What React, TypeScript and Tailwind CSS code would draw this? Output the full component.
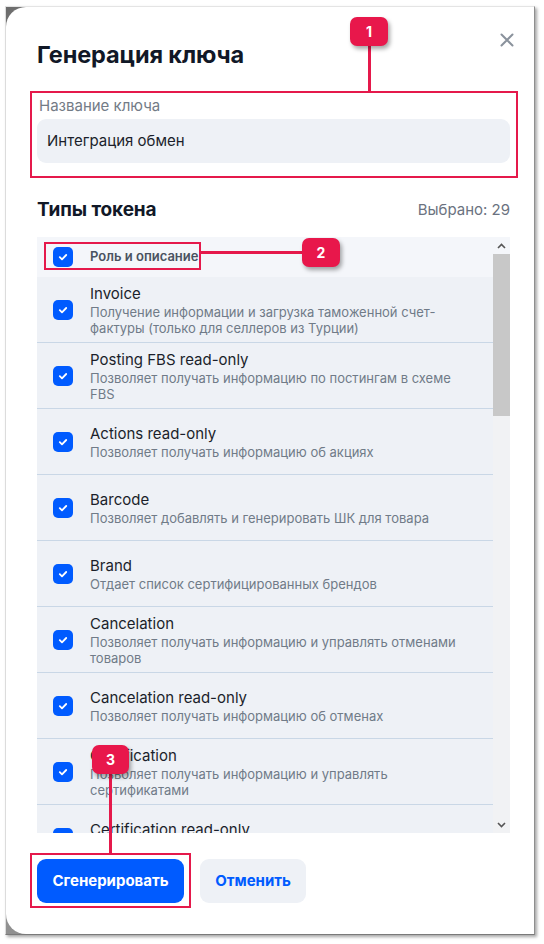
import React from "react";

const rows = [
  { t: "Invoice", d: "Получение информации и загрузка таможенной счет-фактуры (только для селлеров из Турции)" },
  { t: "Posting FBS read-only", d: "Позволяет получать информацию по постингам в схеме FBS" },
  { t: "Actions read-only", d: "Позволяет получать информацию об акциях" },
  { t: "Barcode", d: "Позволяет добавлять и генерировать ШК для товара" },
  { t: "Brand", d: "Отдает список сертифицированных брендов" },
  { t: "Cancelation", d: "Позволяет получать информацию и управлять отменами товаров" },
  { t: "Cancelation read-only", d: "Позволяет получать информацию об отменах" },
  { t: "Certification", d: "Позволяет получать информацию и управлять сертификатами" },
  { t: "Certification read-only", d: "Позволяет получать информацию о сертификатах" },
];

function Check() {
  return (
    <div className="w-[20px] h-[20px] rounded-[5px] bg-[#005bff] flex items-center justify-center shrink-0">
      <svg width="12" height="12" viewBox="0 0 12 12" fill="none">
        <path d="M2.8 6.2 L5 8.3 L9.2 4" stroke="white" strokeWidth="1.8" strokeLinecap="round" strokeLinejoin="round" />
      </svg>
    </div>
  );
}

function Badge({ n, cls }: { n: string; cls: string }) {
  return (
    <div
      className={
        "absolute rounded-[7px] bg-[#e8174b] text-white text-[14px] font-bold flex items-center justify-center shadow-[2px_3px_4px_rgba(0,0,0,0.35)] " +
        cls
      }
    >
      {n}
    </div>
  );
}

export default function App() {
  return (
    <div
      className="relative w-[544px] h-[944px] bg-white overflow-hidden"
      style={{ fontFamily: "Inter, 'Noto Sans', sans-serif" }}
    >
      <div className="pt-[6px] pl-[5px]">
        <div className="w-[530px] h-[929px] bg-[linear-gradient(135deg,#6a6a6a,#9a9a9a_8%,#8a8a8a)] border-t border-t-[#e4e4e4] border-l border-l-[#dcdcdc] border-r border-r-[#8f8f8f] border-b border-b-[#7a7a7a] shadow-[2px_2px_3px_rgba(0,0,0,0.35)]">
          <div className="h-full bg-white rounded-tl-[20px] rounded-bl-[20px] pl-[31px] pr-[24px] pt-[34px] flex flex-col relative">
            <div className="absolute right-[20px] top-[26px]">
              <svg width="14" height="14" viewBox="0 0 14 14">
                <path d="M1.5 1.5 L12.5 12.5 M12.5 1.5 L1.5 12.5" stroke="#8a929c" strokeWidth="2" strokeLinecap="round" />
              </svg>
            </div>
            <div className="text-[23.5px] leading-[28px] font-bold text-[#111827] tracking-[-0.1px]">Генерация ключа</div>
            <div className="mt-[27px] text-[15px] leading-[20px] text-[#737b86] pl-[2px]">Название ключа</div>
            <div className="mt-[3px] h-[44px] rounded-[9px] bg-[#eef1f6] flex items-center pl-[10px] text-[15px] text-[#1b1f2b]">
              Интеграция обмен
            </div>
            <div className="mt-[35px] h-[24px] flex items-center justify-between">
              <div className="text-[19px] leading-[24px] font-bold text-[#111827] tracking-[-0.1px]">Типы токена</div>
              <div className="text-[15px] text-[#6b7280]">Выбрано: 29</div>
            </div>
            <div className="mt-[15px] h-[596px] flex overflow-hidden">
              <div className="flex-1 overflow-hidden">
                <div className="h-[40px] bg-[#f4f6fa] flex items-center pl-[16px] gap-[17px]">
                  <Check />
                  <span className="text-[13px] font-semibold text-[#4a5261]">Роль и описание</span>
                </div>
                {rows.map((r) => (
                  <div
                    key={r.t}
                    className="min-h-[66px] bg-[#eef1f6] border-b border-[#c9d7e6] flex items-center pl-[16px] gap-[17px] pt-[7px] pb-[6px]"
                  >
                    <Check />
                    <div className="max-w-[374px]">
                      <div className="text-[15px] leading-[20px] text-[#1b1f2b]">{r.t}</div>
                      <div className="text-[13px] leading-[16px] text-[#707b88]">{r.d}</div>
                    </div>
                  </div>
                ))}
              </div>
              <div className="w-[17px] bg-[#f1f2f4] flex flex-col">
                <div className="h-[17px] bg-[#f4f6fa] flex items-center justify-center">
                  <svg width="9" height="6" viewBox="0 0 9 6">
                    <path d="M1 5 L4.5 1.5 L8 5" stroke="#555" strokeWidth="1.6" fill="none" />
                  </svg>
                </div>
                <div className="h-[162px] bg-[#c8c8c8]" />
                <div className="flex-1" />
                <div className="h-[17px] flex items-center justify-center">
                  <svg width="9" height="6" viewBox="0 0 9 6">
                    <path d="M1 1 L4.5 4.5 L8 1" stroke="#555" strokeWidth="1.6" fill="none" />
                  </svg>
                </div>
              </div>
            </div>
            <div className="mt-[26px] flex gap-[16px]">
              <div className="h-[44px] w-[147px] rounded-[9px] bg-[#005bff] text-white text-[15px] font-bold flex items-center justify-center">
                Сгенерировать
              </div>
              <div className="h-[44px] w-[106px] rounded-[9px] bg-[#eef1f6] text-[#005bff] text-[15px] font-bold flex items-center justify-center">
                Отменить
              </div>
            </div>
          </div>
        </div>
      </div>

      {/* annotations */}
      <div className="absolute left-[30px] top-[91px] w-[488px] h-[87px] border-2 border-[#e5194b]" />
      <div className="absolute left-[368px] top-[46px] w-[3px] h-[46px] bg-[#e5194b]" />
      <Badge n="1" cls="left-[350px] top-[17px] w-[38px] h-[29px]" />

      <div className="absolute left-[44px] top-[242px] w-[157px] h-[28px] border-2 border-[#e5194b]" />
      <div className="absolute left-[200px] top-[251px] w-[103px] h-[3px] bg-[#e5194b]" />
      <Badge n="2" cls="left-[302px] top-[238px] w-[38px] h-[29px]" />

      <div className="absolute left-[30px] top-[853px] w-[161px] h-[55px] border-2 border-[#e5194b]" />
      <div className="absolute left-[109px] top-[773px] w-[3px] h-[81px] bg-[#e5194b]" />
      <Badge n="3" cls="left-[92px] top-[745px] w-[37px] h-[29px]" />
    </div>
  );
}
